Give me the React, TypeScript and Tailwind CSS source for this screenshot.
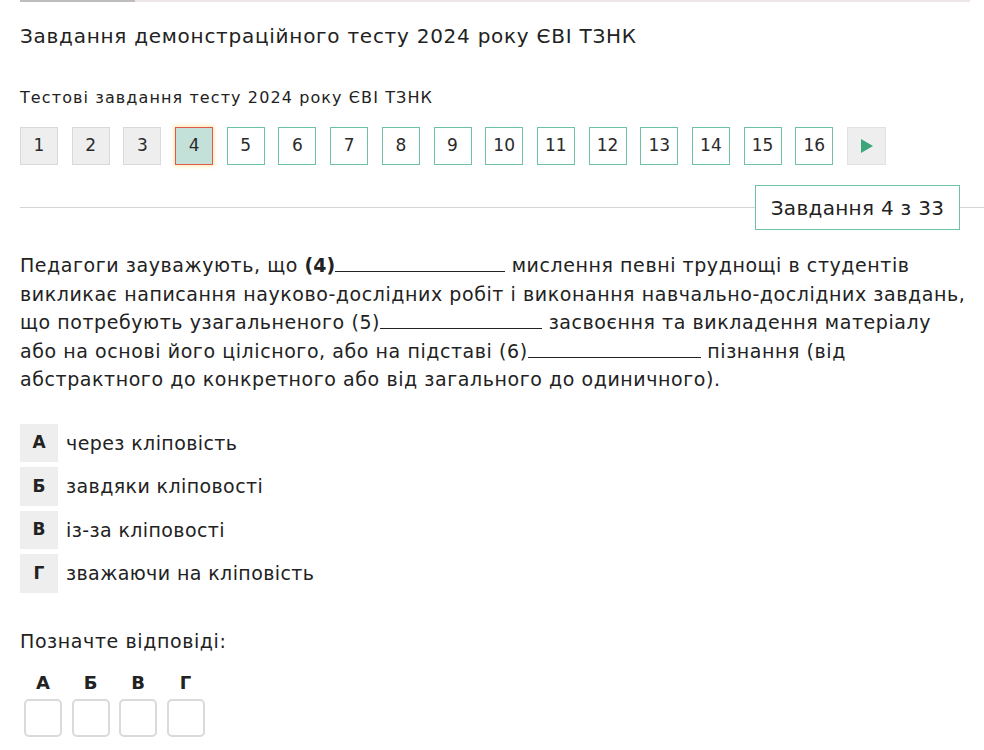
import React from "react";

const F = { fontFamily: '"DejaVu Sans", "Liberation Sans", sans-serif' };

function Blank({ w }: { w: number }) {
  return <span className="inline-block border-b border-[#222] align-baseline" style={{ width: w, height: 1 }} />;
}

export default function App() {
  const nums = Array.from({ length: 16 }, (_, i) => i + 1);
  return (
    <div className="w-[984px] h-[750px] bg-white text-[#222] overflow-hidden" style={F}>
      <div className="pl-[20px]">
        <div className="w-[950px] h-[2px] bg-[#ece6e9] flex">
          <div className="w-[115px] h-full bg-[#bdbdbd]" />
        </div>
        <div className="mt-[20px] text-[20px] leading-[28px] tracking-[0.74px]">
          Завдання демонстраційного тесту 2024 року ЄВІ ТЗНК
        </div>
        <div className="mt-[37px] text-[16px] leading-[22px] tracking-[1.1px]">Тестові завдання тесту 2024 року ЄВІ ТЗНК</div>
        <div className="mt-[18px] flex gap-[13.7px]">
          {nums.map((n) => {
            let cls = "bg-white border-[#6cc2a2]";
            if (n < 4) cls = "bg-[#eeeeee] border-[#d9d9d9]";
            if (n === 4) cls = "bg-[#c3e1d8] border-[#e0574b] shadow-[0_0_4px_1px_#ffe7a8]";
            return (
              <div
                key={n}
                className={`w-[38px] h-[38px] border flex items-center justify-center text-[17px] text-[#2a2a2a] ${cls}`}
              >
                {n}
              </div>
            );
          })}
          <div className="w-[39px] h-[38px] border border-[#e2e2e2] bg-[#eeeeee] flex items-center justify-center">
            <svg width="14" height="16" viewBox="0 0 14 16">
              <polygon points="1,1 13,8 1,15" fill="#3aa67a" />
            </svg>
          </div>
        </div>
        <div className="mt-[20px] flex items-center">
          <div className="flex-1 h-px bg-[#d4d4d4]" />
          <div className="w-[205px] h-[45px] border border-[#6cc2a2] bg-white flex items-center justify-center text-[20px] tracking-[0.3px]">
            Завдання 4 з 33
          </div>
          <div className="w-[24px] h-px bg-[#d4d4d4]" />
        </div>
        <div className="mt-[21px] text-[19px] leading-[28.5px] tracking-[0.57px] whitespace-nowrap">
          <div>
            Педагоги зауважують, що <b className="tracking-normal">(4)</b>
            <Blank w={170} /> мислення певні труднощі в студентів
          </div>
          <div>викликає написання науково-дослідних робіт і виконання навчально-дослідних завдань,</div>
          <div>
            що потребують узагальненого (5)
            <Blank w={162} /> засвоєння та викладення матеріалу
          </div>
          <div>
            або на основі його цілісного, або на підставі (6)
            <Blank w={173} /> пізнання (від
          </div>
          <div>абстрактного до конкретного або від загального до одиничного).</div>
        </div>
        <div className="mt-[30px] flex flex-col gap-[5px]">
          {[
            ["А", "через кліповість"],
            ["Б", "завдяки кліповості"],
            ["В", "із-за кліповості"],
            ["Г", "зважаючи на кліповість"],
          ].map(([l, t]) => (
            <div key={l} className="flex items-center h-[38.5px]">
              <div className="w-[38px] h-full bg-[#eeeeee] flex items-center justify-center font-bold text-[17px]">
                {l}
              </div>
              <div className="ml-[8px] text-[19px] tracking-[0.4px]">{t}</div>
            </div>
          ))}
        </div>
        <div className="mt-[35px] text-[19px] leading-[26px] tracking-[0.6px]">Позначте відповіді:</div>
        <div className="mt-[19px] ml-[4px] flex gap-[9.5px]">
          {["А", "Б", "В", "Г"].map((l) => (
            <div key={l} className="flex flex-col items-center w-[38px]">
              <div className="font-bold text-[18px] leading-[20px]">{l}</div>
              <div className="mt-[6px] w-[38px] h-[38px] border-2 border-[#dadada] rounded-[5px] bg-white" />
            </div>
          ))}
        </div>
      </div>
    </div>
  );
}
